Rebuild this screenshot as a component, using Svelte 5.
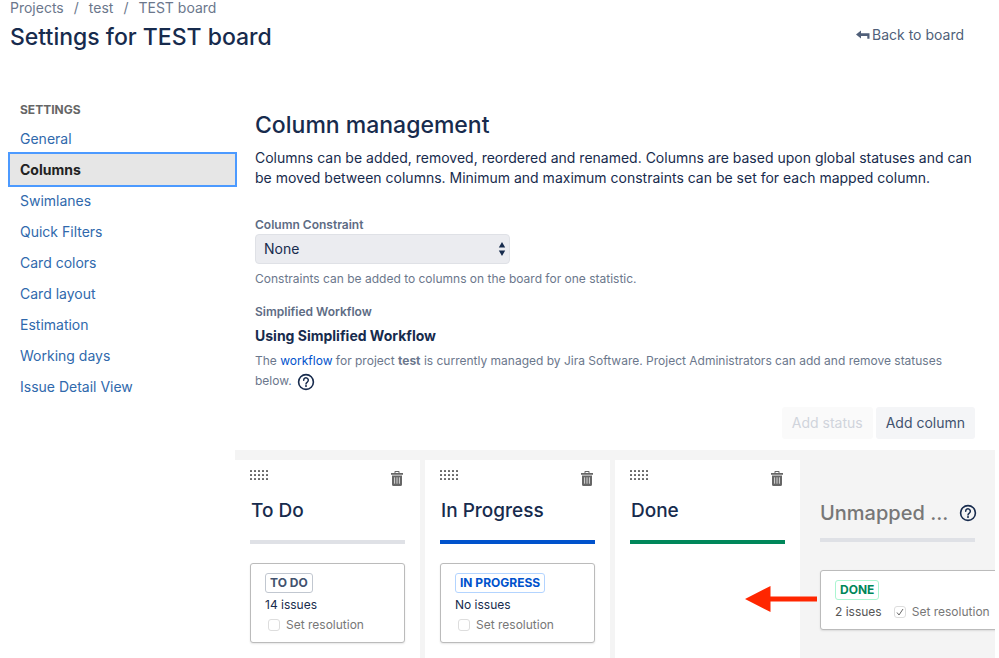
<script lang="ts">
	type Status = { id: string; name: string; tone: string; issues: string };
	type Column = { name: string; tone: string; statuses: Status[] };

	const crumbs = ["Projects", "test", "TEST board"];
	const tabs = [
		"General",
		"Columns",
		"Swimlanes",
		"Quick Filters",
		"Card colors",
		"Card layout",
		"Estimation",
		"Working days",
		"Issue Detail View"
	];
	const columns: Column[] = [
		{
			name: "To Do",
			tone: "new",
			statuses: [{ id: "todo", name: "TO DO", tone: "new", issues: "14 issues" }]
		},
		{
			name: "In Progress",
			tone: "progress",
			statuses: [{ id: "progress", name: "IN PROGRESS", tone: "progress", issues: "No issues" }]
		},
		{ name: "Done", tone: "done", statuses: [] }
	];

	let activeTab = $state("Columns");
	let constraint = $state("none");
	let resolution = $state({ todo: false, progress: false, done: true });
</script>

{#snippet helpIcon()}
	<svg class="help-icon" viewBox="0 0 18 18" aria-hidden="true">
		<circle cx="9" cy="9" r="7.4" fill="none" stroke="currentColor" stroke-width="1.6" />
		<path
			d="M6.7 7.2a2.3 2.3 0 1 1 3.7 1.8c-.9.6-1.4.9-1.4 1.9"
			fill="none"
			stroke="currentColor"
			stroke-width="1.5"
			stroke-linecap="round"
		/>
		<circle cx="9" cy="13" r="1" fill="currentColor" />
	</svg>
{/snippet}

<div class="page">
	<header>
		<div>
			<nav class="breadcrumbs" aria-label="Breadcrumbs">
				{#each crumbs as crumb, i}
					{#if i > 0}<span>/</span>{/if}
					<a href="#top">{crumb}</a>
				{/each}
			</nav>
			<h1>Settings for TEST board</h1>
		</div>
		<a class="back" href="#board">
			<svg viewBox="0 0 14 10" aria-hidden="true">
				<path d="M0 4.500 5 .5v2.700h8.500v5.500h-2.200V6H5v2.500z" fill="currentColor" />
			</svg>
			Back to board
		</a>
	</header>

	<div class="layout">
		<nav class="sidebar" aria-label="Settings">
			<h2>SETTINGS</h2>
			<ul>
				{#each tabs as tab}
					<li>
						<a href="#settings" class:active={tab === activeTab} onclick={() => (activeTab = tab)}>{tab}</a>
					</li>
				{/each}
			</ul>
		</nav>

		<main>
			<section class="config">
				<h2>Column management</h2>
				<p class="intro">
					Columns can be added, removed, reordered and renamed. Columns are based upon global statuses and can
					be moved between columns. Minimum and maximum constraints can be set for each mapped column.
				</p>

				<label class="field-label" for="constraint">Column Constraint</label>
				<div class="select">
					<select id="constraint" bind:value={constraint}>
						<option value="none">None</option>
						<option value="issues">Issue Count</option>
					</select>
					<svg viewBox="0 0 8 14" aria-hidden="true">
						<path d="M4 0 7.2 5.5H.8zM4 14 .8 8.5h6.4z" fill="currentColor" />
					</svg>
				</div>
				<p class="hint">Constraints can be added to columns on the board for one statistic.</p>

				<div class="field-label">Simplified Workflow</div>
				<h3>Using Simplified Workflow</h3>
				<p class="workflow">
					The <a href="#workflow">workflow</a> for project <strong>test</strong> is currently managed by Jira
					Software. Project Administrators can add and remove statuses below.
					<button class="help" aria-label="Help">{@render helpIcon()}</button>
				</p>

				<div class="actions">
					<button class="action" disabled>Add status</button>
					<button class="action">Add column</button>
				</div>
			</section>

			<section class="board">
				{#each columns as column}
					<div class="column">
						<div class="tools">
							<svg class="grip" viewBox="0 0 20 11" aria-hidden="true">
								{#each [0, 4, 8, 12, 16] as x}
									{#each [0, 4, 8] as y}
										<rect {x} {y} width="2" height="2" rx="0.5" />
									{/each}
								{/each}
							</svg>
							<button class="trash" aria-label="Delete column">
								<svg viewBox="0 0 12 15" aria-hidden="true">
									<path
										d="M4.2 0h3.6q.7 0 .7.7V2H12v1.7H0V2h3.5V.7q0-.7.7-.7zm.3 1v1h3V1zM1 4.6h10v8.9q0 1.5-1.5 1.5h-7Q1 15 1 13.500z"
										fill="#666"
										fill-rule="evenodd"
									/>
									<path d="M3.600 6.300v6.400M6 6.300v6.400M8.400 6.300v6.400" stroke="#e4e4e4" stroke-width="0.900" />
								</svg>
							</button>
						</div>
						<h4>{column.name}</h4>
						<div class="bar {column.tone}"></div>
						{#each column.statuses as status}
							<div class="card">
								<span class="lozenge {status.tone}">{status.name}</span>
								<div class="issues">{status.issues}</div>
								<label class="resolution">
									<input type="checkbox" bind:checked={resolution[status.id]} />
									Set resolution
								</label>
							</div>
						{/each}
					</div>
				{/each}

				<div class="unmapped">
					<div class="title">
						<h4>Unmapped ...</h4>
						<button class="help" aria-label="Help">{@render helpIcon()}</button>
					</div>
					<div class="bar"></div>
					<div class="card">
						<span class="lozenge done">DONE</span>
						<div class="row">
							<span>2 issues</span>
							<label class="resolution">
								<input type="checkbox" bind:checked={resolution.done} />
								Set resolution
							</label>
						</div>
						<svg class="arrow" viewBox="0 0 72 26" aria-hidden="true">
							<path d="M0 13 25.500 0v10.500H72v5H25.500V26z" fill="#ff2600" />
						</svg>
					</div>
				</div>
			</section>
		</main>
	</div>
</div>

<style>
	:global(body) {
		background: #fff;
	}
	.page {
		padding: 0 4px 0 10px;
		font-family: Inter, "Liberation Sans", sans-serif;
		font-size: 14px;
		line-height: 20px;
		color: #172b4d;
		overflow: hidden;
	}
	h1,
	h2,
	h3,
	h4,
	p,
	ul {
		margin: 0;
		padding: 0;
	}
	a {
		text-decoration: none;
	}
	button {
		border: none;
		padding: 0;
		font: inherit;
		background: none;
	}
	header {
		display: flex;
		justify-content: space-between;
		align-items: flex-end;
	}
	.breadcrumbs {
		display: flex;
		gap: 10px;
		margin-bottom: 6px;
		line-height: 15px;
		color: #6b778c;
	}
	.breadcrumbs a {
		color: inherit;
	}
	h1,
	.config h2 {
		font-size: 23px;
		font-weight: 500;
		line-height: 32px;
	}
	.back {
		display: flex;
		align-items: center;
		gap: 2px;
		margin: 0 31px 8px 0;
		color: #505f79;
	}
	.back svg {
		width: 14px;
		height: 10px;
	}

	.layout {
		display: grid;
		grid-template-columns: 225px minmax(0, 1fr);
		margin-top: 47px;
	}
	.sidebar h2 {
		padding-left: 10px;
		margin-bottom: 3px;
		font-size: 12px;
		font-weight: 700;
		color: #666;
	}
	.sidebar ul {
		list-style: none;
	}
	.sidebar a {
		display: block;
		padding: 0 10px;
		line-height: 31px;
		color: #3069ac;
	}
	.sidebar a.active {
		font-weight: 700;
		color: #222;
		background: #e6e6e6;
		outline: 2px solid #4c9aff;
	}

	.config {
		padding: 9px 20px 11px;
	}
	.intro {
		margin: 7px 0 28px;
	}
	.field-label {
		display: block;
		font-size: 12px;
		font-weight: 600;
		line-height: 18px;
		color: #5e6c84;
	}
	.select {
		display: grid;
		width: 255px;
		align-items: center;
	}
	.select select,
	.select svg {
		grid-area: 1 / 1;
	}
	.select select {
		appearance: none;
		height: 30px;
		padding: 0 8px;
		border: 1px solid #dfe1e6;
		border-radius: 4px;
		font: inherit;
		color: inherit;
		background: #ebecf0;
	}
	.select svg {
		justify-self: end;
		width: 8px;
		height: 14px;
		margin-right: 4px;
		pointer-events: none;
	}
	.hint {
		margin: 5px 0 14px;
		font-size: 12px;
		color: #6b778c;
	}
	h3 {
		margin: 5px 0;
		font-size: 14px;
		font-weight: 700;
	}
	.workflow {
		font-size: 12px;
		color: #6b778c;
	}
	.workflow a {
		color: #0052cc;
	}
	.help {
		color: #172b4d;
	}
	.help-icon {
		display: block;
		width: 18px;
		height: 18px;
	}
	.workflow .help {
		margin-left: 2px;
		vertical-align: middle;
	}
	.actions {
		display: flex;
		justify-content: flex-end;
		gap: 3px;
		margin-top: 16px;
	}
	.action {
		padding: 0 10px;
		border-radius: 3px;
		line-height: 32px;
		color: #42526e;
		background: #f4f5f7;
	}
	.action:disabled {
		color: #d0d4dc;
		background: #fafafa;
	}

	.board {
		display: grid;
		grid-template-columns: repeat(3, minmax(0, 1fr)) 190px;
		gap: 5px;
		padding-top: 10px;
		background: #f4f4f4;
		overflow: hidden;
	}
	.column {
		padding: 10px 15px 15px;
		background: #fff;
	}
	.tools {
		display: flex;
		justify-content: space-between;
		height: 16px;
	}
	.grip {
		width: 20px;
		height: 11px;
		fill: #666;
	}
	.trash {
		align-self: flex-end;
		margin-right: 2px;
	}
	.trash svg {
		display: block;
		width: 12px;
		height: 15px;
	}
	h4 {
		font-size: 20px;
		font-weight: 500;
		line-height: 24px;
	}
	.column h4 {
		margin: 13px 0 17px 1px;
		font-size: 19px;
	}
	.bar {
		height: 4px;
		background: #dfe1e6;
	}
	.bar.progress {
		background: #0052cc;
	}
	.bar.done {
		background: #00875a;
	}
	.card {
		padding: 9px 14px 7px;
		margin-top: 19px;
		border: 1px solid #bbb;
		border-radius: 3px;
		font-size: 12px;
		background: #fff;
		box-shadow: 0 1px 2px #0000001a;
	}
	.lozenge {
		display: inline-block;
		padding: 0 4px;
		margin-bottom: 2px;
		border: 1px solid #c1c7d0;
		border-radius: 3px;
		font-weight: 700;
		line-height: 18px;
		color: #42526e;
	}
	.lozenge.progress {
		border-color: #b3d4ff;
		color: #0052cc;
	}
	.lozenge.done {
		border-color: #abf5d1;
		color: #00875a;
	}
	.resolution {
		display: flex;
		align-items: center;
		gap: 6px;
		color: #777;
	}
	.column .resolution {
		padding-left: 3px;
	}
	.resolution input {
		appearance: none;
		width: 12px;
		height: 12px;
		margin: 0;
		border: 1px solid #ddd;
		border-radius: 3px;
		background: #fff;
	}
	.resolution input:checked {
		background: url("data:image/svg+xml,%3Csvg xmlns='http://www.w3.org/2000/svg' viewBox='0 0 10 10'%3E%3Cpath d='M2 5.500 4 8 8 2' fill='none' stroke='%23666'/%3E%3C/svg%3E");
	}

	.unmapped {
		padding: 41px 18px 15px 15px;
	}
	.title {
		display: flex;
		align-items: center;
		justify-content: space-between;
		margin-bottom: 13px;
		color: #777;
	}
	.title h4 {
		white-space: nowrap;
	}
	.unmapped .bar {
		margin-right: 2px;
	}
	.unmapped .card {
		position: relative;
		width: 180px;
		margin-top: 28px;
	}
	.row {
		display: flex;
		gap: 12px;
		color: #555;
		white-space: nowrap;
	}
	.arrow {
		position: absolute;
		right: 100%;
		top: 15px;
		width: 72px;
		height: 26px;
		margin-right: 4px;
	}
</style>
